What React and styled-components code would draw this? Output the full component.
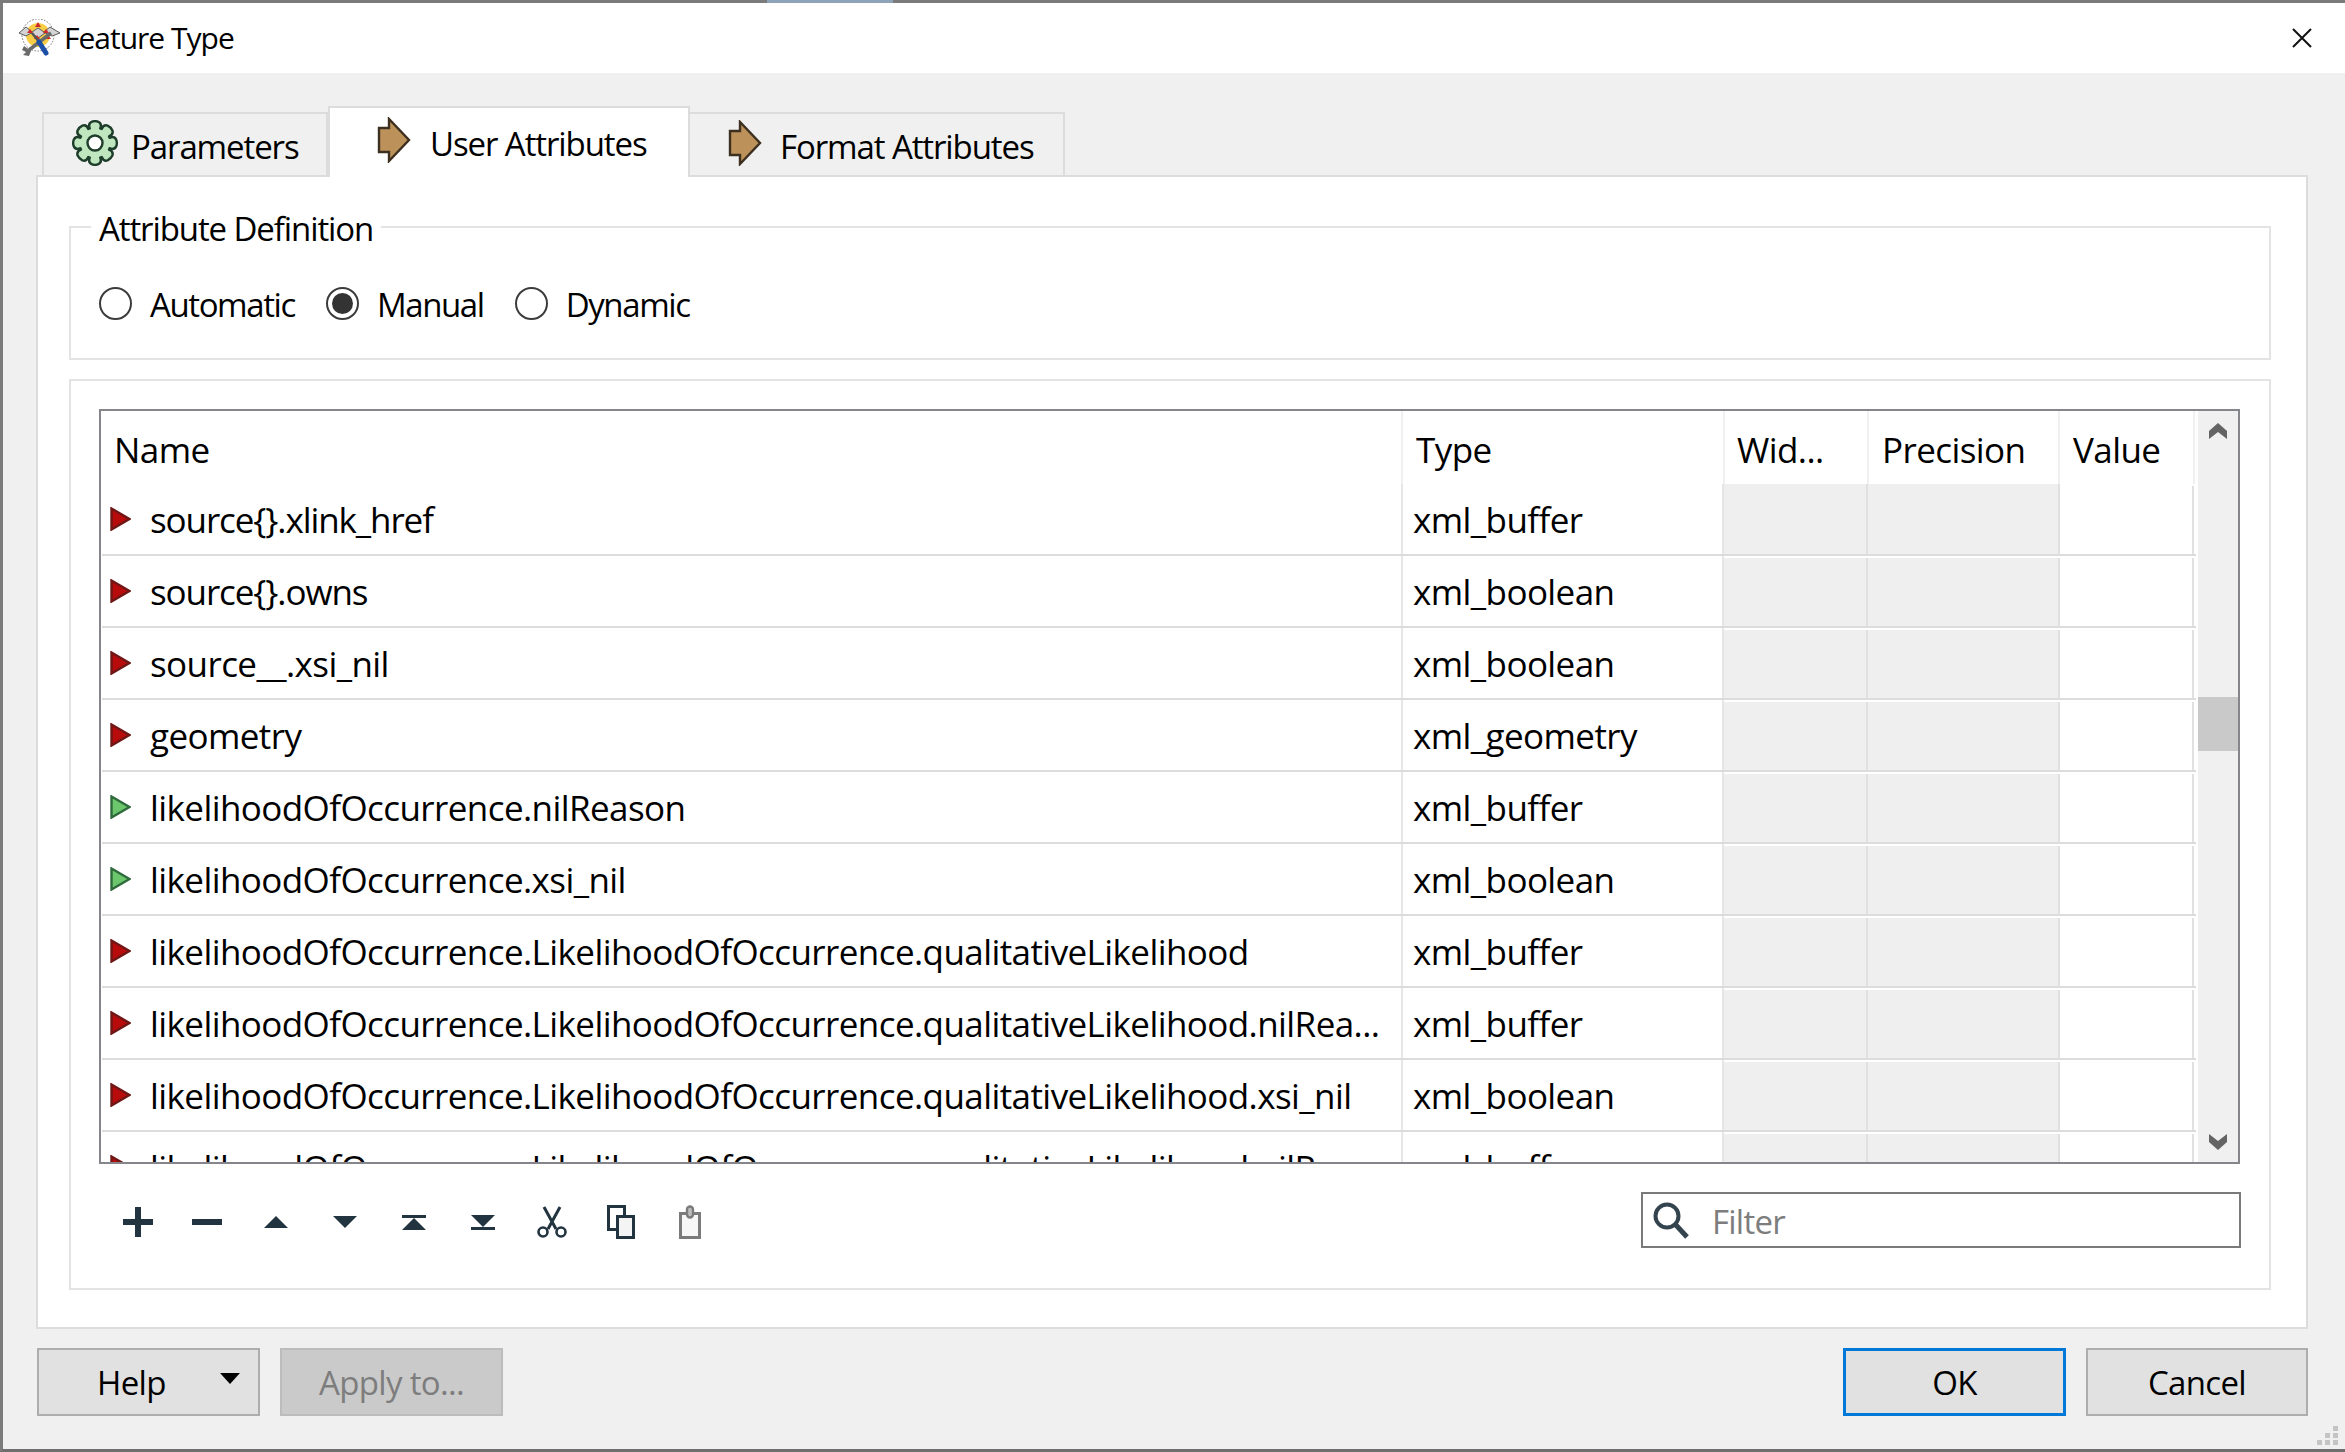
import styled, { createGlobalStyle } from "styled-components";

const GlobalStyle = createGlobalStyle`
  html, body {
    margin: 0;
    padding: 0;
    background: #f0f0f0;
  }
  * {
    box-sizing: border-box;
  }
`;

const Window = styled.div`
  position: relative;
  width: 2345px;
  height: 1452px;
  display: flex;
  flex-direction: column;
  background: #f0f0f0;
  border-top: 3px solid #7b7b7b;
  border-left: 3px solid #7b7b7b;
  border-bottom: 3px solid #6e6e6e;
  font-family: "Open Sans", "Noto Sans", sans-serif;
  font-size: 33px;
  letter-spacing: -1.1px;
  color: #000;
`;

const TopGlint = styled.div`
  position: absolute;
  top: -3px;
  left: 764px;
  width: 126px;
  height: 3px;
  background: #8ea3b8;
`;

const TitleBar = styled.div`
  height: 70px;
  flex: none;
  display: flex;
  align-items: center;
  background: #fff;
  padding-left: 16px;
  padding-right: 33px;
  font-size: 30px;
  letter-spacing: -1px;
`;

const TitleText = styled.span`
  margin-left: 3px;
  flex: 1;
  padding-bottom: 2px;
`;

const TabRow = styled.div`
  height: 102px;
  flex: none;
  display: flex;
  align-items: flex-end;
  padding-left: 39px;
`;

const Tab = styled.div`
  display: flex;
  align-items: center;
  width: ${(p) => p.$width}px;
  height: ${(p) => (p.$active ? 71 : 63)}px;
  padding-left: ${(p) => p.$pad}px;
  padding-bottom: ${(p) => (p.$active ? 3 : 0)}px;
  gap: ${(p) => p.$gap}px;
  background: ${(p) => (p.$active ? "#fff" : "#f0f0f0")};
  border: 2px solid #dcdcdc;
  border-bottom: none;
  border-left-width: ${(p) => (p.$active ? 2 : p.$first ? 2 : 0)}px;
  position: relative;
  z-index: ${(p) => (p.$active ? 1 : 0)};
  margin-bottom: ${(p) => (p.$active ? -2 : 0)}px;
  svg {
    margin-bottom: 3px;
  }
`;

const TabLabel = styled.span`
  padding-top: 4px;
`;

const Panel = styled.div`
  margin-left: 33px;
  width: 2272px;
  height: 1154px;
  flex: none;
  background: #fff;
  border: 2px solid #dcdcdc;
  padding: 49px 35px 0 31px;
  display: flex;
  flex-direction: column;
`;

const GroupBox = styled.div`
  position: relative;
  height: ${(p) => p.$height}px;
  flex: none;
  margin-bottom: ${(p) => p.$below || 0}px;
  border: 2px solid #e3e3e3;
`;

const Legend = styled.div`
  position: absolute;
  top: -19px;
  left: 20px;
  padding: 0 8px;
  background: #fff;
  line-height: 40px;
`;

const RadioRow = styled.div`
  display: flex;
  align-items: center;
  padding: 51px 0 0 28px;
  gap: 31px;
  letter-spacing: -1.4px;
`;

const RadioItem = styled.label`
  display: flex;
  align-items: center;
  gap: 18px;
`;

const RadioDot = styled.span`
  width: 33px;
  height: 33px;
  flex: none;
  border-radius: 50%;
  border: 2px solid #3c3c3c;
  background: #fff;
  display: flex;
  align-items: center;
  justify-content: center;
  &::after {
    content: "";
    width: 21px;
    height: 21px;
    border-radius: 50%;
    background: ${(p) => (p.$on ? "#333" : "transparent")};
  }
`;

const RadioText = styled.span`
  padding-top: 3px;
`;

const Table = styled.div`
  margin: 28px 0 0 28px;
  width: 2141px;
  height: 755px;
  border: 2px solid #85858c;
  display: flex;
  overflow: hidden;
  font-size: 35px;
  letter-spacing: -0.58px;
`;

const TableMain = styled.div`
  flex: 1;
  min-width: 0;
`;

const HeaderRow = styled.div`
  display: grid;
  grid-template-columns: 1302px 322px 144px 191px 135px;
  height: 73px;
`;

const HeaderCell = styled.div`
  display: flex;
  align-items: center;
  padding-left: ${(p) => p.$pad || 13}px;
  padding-top: 3px;
  border-right: 2px solid #f0f0f0;
  white-space: nowrap;
  overflow: hidden;
`;

const Row = styled.div`
  display: grid;
  grid-template-columns: 1301px 321px 144px 192px 134px;
  height: 72px;
  margin-left: 1px;
  &:first-of-type {
    height: 69px;
  }
  border-bottom: 2px solid #dcdcdc;
`;

const NameCell = styled.div`
  display: flex;
  align-items: center;
  padding-left: 8px;
  gap: 19px;
  border-right: 2px solid #e6e6e6;
  white-space: nowrap;
  overflow: hidden;
`;

const NameText = styled.span`
  letter-spacing: ${(p) => (p.$tight ? "-1.1px" : "inherit")};
`;

const TextCell = styled.div`
  display: flex;
  align-items: center;
  padding-left: 10px;
  border-right: 2px solid #e6e6e6;
  white-space: nowrap;
`;

const BlankCell = styled.div`
  border-right: 2px solid #e0e0e0;
  background: ${(p) => (p.$disabled ? "#efefef" : "#fff")};
  margin-top: ${(p) => (p.$flush ? 0 : 2)}px;
`;

const ScrollBar = styled.div`
  width: 40px;
  flex: none;
  margin-left: 2px;
  background: #f0f0f0;
  display: flex;
  flex-direction: column;
  align-items: center;
`;

const ScrollButton = styled.div`
  height: 40px;
  flex: none;
  display: flex;
  align-items: center;
  justify-content: center;
`;

const ScrollThumb = styled.div`
  width: 100%;
  height: 54px;
  margin-top: 246px;
  margin-bottom: auto;
  background: #c9c9c9;
`;

const Toolbar = styled.div`
  display: flex;
  align-items: center;
  height: 56px;
  margin: 28px 28px 0 32px;
  letter-spacing: -0.75px;
`;

const ToolButton = styled.div`
  width: 69px;
  height: 40px;
  flex: none;
  margin-top: 3px;
  display: flex;
  align-items: center;
  justify-content: center;
`;

const FilterBox = styled.div`
  margin-left: auto;
  width: 600px;
  height: 56px;
  border: 2px solid #7a7a7a;
  background: #fff;
  display: flex;
  align-items: center;
  padding-left: 9px;
  gap: 22px;
`;

const FilterInput = styled.input`
  border: none;
  outline: none;
  flex: 1;
  min-width: 0;
  padding: 3px 0 0;
  font: inherit;
  letter-spacing: inherit;
  background: transparent;
  &::placeholder {
    color: #7d7d7d;
    opacity: 1;
  }
`;

const Footer = styled.div`
  display: flex;
  align-items: center;
  padding: 19px 37px 0 34px;
  gap: 20px;
  letter-spacing: -0.65px;
`;

const Button = styled.div`
  width: ${(p) => p.$width}px;
  height: 68px;
  flex: none;
  display: flex;
  align-items: center;
  justify-content: ${(p) => (p.$split ? "space-between" : "center")};
  padding: ${(p) => (p.$split ? "0 18px 0 58px" : "0")};
  margin-left: ${(p) => (p.$push ? "auto" : "0")};
  background: ${(p) => (p.$disabled ? "#cacaca" : "#e1e1e1")};
  color: ${(p) => (p.$disabled ? "#7d7d7d" : "#000")};
  border: 2px solid ${(p) => (p.$focus ? "#0078d7" : p.$disabled ? "#bcbcbc" : "#adadad")};
  border-width: ${(p) => (p.$focus ? 3 : 2)}px;
`;

const Grip = styled.svg`
  position: absolute;
  right: 4px;
  bottom: 3px;
`;

const CloseIcon = () => (
  <svg width="20" height="20" viewBox="0 0 20 20">
    <path d="M1 1 L19 19 M19 1 L1 19" stroke="#111" strokeWidth="2" fill="none" />
  </svg>
);

const AppIcon = () => (
  <svg width="42" height="38" viewBox="0 0 42 38">
    <circle cx="19" cy="16" r="16" fill="none" stroke="#6f6f6f" strokeWidth="1" strokeDasharray="1.5 1.5" />
    <circle cx="19" cy="16" r="12" fill="#f7cd45" />
    <path d="M0 14 L7 8 L13 13 L19 9 L25 13 L31 8 L41 14 L33 17 L26 14 L19 19 L12 14 L7 17 Z" fill="#d4d4d4" stroke="#5c5c5c" strokeWidth="1" />
    <path d="M16 8 L19 3 L22 8 Z M8 14 L11 10 L14 14 Z M24 14 L27 10 L30 14 Z M15 20 L18 16 L21 20 Z M26 20 L29 16 L32 20 Z" fill="#d0282c" />
    <path d="M32 14 L10 31" stroke="#6a6a6a" strokeWidth="3.5" />
    <path d="M5 27 L12 32 L10 37 L4 36 L7 33 L3 31 Z" fill="#6a6a6a" />
    <path d="M13 14 L21 24" stroke="#555" strokeWidth="2.5" />
    <path d="M20 23 L27 34" stroke="#1c4fa8" strokeWidth="5" strokeLinecap="round" />
  </svg>
);

// cog wheel with 8 rounded teeth
const gearPath = () => {
  const cx = 23;
  const cy = 23;
  const points = [];
  for (let i = 0; i < 8; i++) {
    const a = (i * Math.PI) / 4 - Math.PI / 2;
    const pt = (r, da) => `${(cx + r * Math.cos(a + da)).toFixed(1)} ${(cy + r * Math.sin(a + da)).toFixed(1)}`;
    points.push(`${i === 0 ? "M" : "L"}${pt(15.5, -0.34)}`);
    points.push(`Q${pt(20.5, -0.36)} ${pt(21.5, -0.16)}`);
    points.push(`Q${pt(22.5, 0)} ${pt(21.5, 0.16)}`);
    points.push(`Q${pt(20.5, 0.36)} ${pt(15.5, 0.34)}`);
  }
  return points.join(" ") + " Z";
};

const GearIcon = () => (
  <svg width="46" height="46" viewBox="0 0 46 46">
    <path d={gearPath()} fill="#bfe6bf" stroke="#1f3d2b" strokeWidth="2.4" strokeLinejoin="round" />
    <circle cx="23" cy="23" r="7.5" fill="#fff" stroke="#1f3d2b" strokeWidth="2.4" />
  </svg>
);

const ArrowIcon = () => (
  <svg width="34" height="46" viewBox="0 0 34 46">
    <path d="M2 11 H12 V2 L32 23 L12 44 V35 H2 Z" fill="#bd915a" stroke="#3d3020" strokeWidth="2.4" />
  </svg>
);

const RowArrow = ({ green }) => (
  <svg width="21" height="24" viewBox="0 0 21 24" style={{ flex: "none", marginBottom: 1 }}>
    <path
      d="M1.5 1.5 L19.5 12 L1.5 22.5 Z"
      fill={green ? "#6cc76c" : "#b80c0c"}
      stroke={green ? "#2f6a3c" : "#6f1616"}
      strokeWidth="2.4"
    />
  </svg>
);

const Chevron = ({ down }) => (
  <svg width="20" height="18" viewBox="0 0 20 18">
    <path
      d={down ? "M1 1 L10 8 L19 1 V9 L10 17 L1 9 Z" : "M1 17 L10 10 L19 17 V9 L10 1 L1 9 Z"}
      fill="#646464"
    />
  </svg>
);

const DARK = "#22343f";

const toolIcons = [
  <svg key="add" width="30" height="30" viewBox="0 0 30 30">
    <path d="M12 0 H18 V12 H30 V18 H18 V30 H12 V18 H0 V12 H12 Z" fill={DARK} />
  </svg>,
  <svg key="remove" width="30" height="30" viewBox="0 0 30 30">
    <rect x="0" y="12" width="30" height="6" fill={DARK} />
  </svg>,
  <svg key="up" width="24" height="30" viewBox="0 0 24 30">
    <path d="M12 9 L24 21 H0 Z" fill={DARK} />
  </svg>,
  <svg key="down" width="24" height="30" viewBox="0 0 24 30">
    <path d="M0 9 H24 L12 21 Z" fill={DARK} />
  </svg>,
  <svg key="top" width="24" height="30" viewBox="0 0 24 30">
    <rect x="0" y="8" width="24" height="3" fill={DARK} />
    <path d="M12 11 L24 23 H0 Z" fill={DARK} />
  </svg>,
  <svg key="bottom" width="24" height="30" viewBox="0 0 24 30">
    <path d="M0 8 H24 L12 20 Z" fill={DARK} />
    <rect x="0" y="20" width="24" height="3" fill={DARK} />
  </svg>,
  <svg key="cut" width="30" height="32" viewBox="0 0 30 32" fill="none" stroke={DARK}>
    <path d="M7 1 L19 23 M23 1 L11 23" strokeWidth="3" />
    <circle cx="6" cy="26" r="4.5" strokeWidth="2.6" />
    <circle cx="24" cy="26" r="4.5" strokeWidth="2.6" />
  </svg>,
  <svg key="copy" width="28" height="34" viewBox="0 0 28 34">
    <rect x="1.5" y="1.5" width="16" height="23" fill="#fff" stroke={DARK} strokeWidth="3" />
    <rect x="10.5" y="11.5" width="16" height="21" fill="#f4f4f4" stroke={DARK} strokeWidth="3" />
  </svg>,
  <svg key="paste" width="22" height="34" viewBox="0 0 22 34">
    <rect x="1.5" y="8.5" width="19" height="24" fill="#f7f7f7" stroke="#7b7b7b" strokeWidth="3" />
    <rect x="8" y="1.5" width="6" height="11" rx="3" fill="#bdbdbd" stroke="#7b7b7b" strokeWidth="2.4" />
  </svg>,
];

const SearchIcon = () => (
  <svg width="38" height="38" viewBox="0 0 38 38" style={{ flex: "none" }}>
    <circle cx="15" cy="15" r="11.5" fill="#fff" stroke="#34444f" strokeWidth="4" />
    <path d="M23 23 L35 36" stroke="#34444f" strokeWidth="5" />
  </svg>
);

const HelpArrow = () => (
  <svg width="20" height="12" viewBox="0 0 20 12" style={{ marginBottom: 6 }}>
    <path d="M0 0 H20 L10 11 Z" fill="#000" />
  </svg>
);

const columns = [
  { label: "Name", pad: 13 },
  { label: "Type" },
  { label: "Wid...", pad: 12 },
  { label: "Precision" },
  { label: "Value" },
];

const rows = [
  ["source{}.xlink_href", "xml_buffer"],
  ["source{}.owns", "xml_boolean"],
  ["source__.xsi_nil", "xml_boolean"],
  ["geometry", "xml_geometry"],
  ["likelihoodOfOccurrence.nilReason", "xml_buffer", true],
  ["likelihoodOfOccurrence.xsi_nil", "xml_boolean", true],
  ["likelihoodOfOccurrence.LikelihoodOfOccurrence.qualitativeLikelihood", "xml_buffer"],
  ["likelihoodOfOccurrence.LikelihoodOfOccurrence.qualitativeLikelihood.nilRea...", "xml_buffer"],
  ["likelihoodOfOccurrence.LikelihoodOfOccurrence.qualitativeLikelihood.xsi_nil", "xml_boolean"],
  ["likelihoodOfOccurrence.LikelihoodOfOccurrence.qualitativeLikelihood.nilR", "xml_buffer"],
];

function App() {
  return (
    <>
      <GlobalStyle />
      <Window>
        <TopGlint />
        <TitleBar>
          <AppIcon />
          <TitleText>Feature Type</TitleText>
          <CloseIcon />
        </TitleBar>

        <TabRow>
          <Tab $width={286} $pad={28} $gap={13} $first>
            <GearIcon />
            <TabLabel>Parameters</TabLabel>
          </Tab>
          <Tab $width={362} $pad={47} $gap={19} $active>
            <ArrowIcon />
            <TabLabel>User Attributes</TabLabel>
          </Tab>
          <Tab $width={375} $pad={38} $gap={18}>
            <ArrowIcon />
            <TabLabel>Format Attributes</TabLabel>
          </Tab>
        </TabRow>

        <Panel>
          <GroupBox $height={134} $below={19}>
            <Legend>Attribute Definition</Legend>
            <RadioRow>
              <RadioItem>
                <RadioDot />
                <RadioText>Automatic</RadioText>
              </RadioItem>
              <RadioItem>
                <RadioDot $on />
                <RadioText>Manual</RadioText>
              </RadioItem>
              <RadioItem>
                <RadioDot />
                <RadioText>Dynamic</RadioText>
              </RadioItem>
            </RadioRow>
          </GroupBox>

          <GroupBox $height={911}>
            <Table>
              <TableMain>
                <HeaderRow>
                  {columns.map((c) => (
                    <HeaderCell key={c.label} $pad={c.pad}>
                      {c.label}
                    </HeaderCell>
                  ))}
                </HeaderRow>
                {rows.map(([name, type, green], i) => (
                  <Row key={name}>
                    <NameCell>
                      <RowArrow green={green} />
                      <NameText $tight={name.includes("{")}>{name}</NameText>
                    </NameCell>
                    <TextCell>{type}</TextCell>
                    <BlankCell $disabled $flush={i === 0} />
                    <BlankCell $disabled $flush={i === 0} />
                    <BlankCell />
                  </Row>
                ))}
              </TableMain>
              <ScrollBar>
                <ScrollButton>
                  <Chevron />
                </ScrollButton>
                <ScrollThumb />
                <ScrollButton>
                  <Chevron down />
                </ScrollButton>
              </ScrollBar>
            </Table>

            <Toolbar>
              {toolIcons.map((icon) => (
                <ToolButton key={icon.key}>{icon}</ToolButton>
              ))}
              <FilterBox>
                <SearchIcon />
                <FilterInput placeholder="Filter" />
              </FilterBox>
            </Toolbar>
          </GroupBox>
        </Panel>

        <Footer>
          <Button $width={223} $split>
            <span>Help</span>
            <HelpArrow />
          </Button>
          <Button $width={223} $disabled>
            <span>Apply to...</span>
          </Button>
          <Button $width={223} $focus $push>
            <span>OK</span>
          </Button>
          <Button $width={222}>
            <span>Cancel</span>
          </Button>
        </Footer>

        <Grip width="24" height="20" viewBox="0 0 24 20" fill="#c4c4c4">
          <rect x="16" y="0" width="5" height="5" />
          <rect x="8" y="7" width="5" height="5" />
          <rect x="16" y="7" width="5" height="5" />
          <rect x="0" y="14" width="5" height="5" />
          <rect x="8" y="14" width="5" height="5" />
          <rect x="16" y="14" width="5" height="5" />
        </Grip>
      </Window>
    </>
  );
}

export default App;
